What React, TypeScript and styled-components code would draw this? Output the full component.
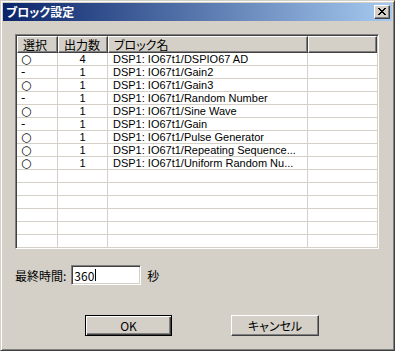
import styled, { createGlobalStyle } from "styled-components"

const GlobalStyle = createGlobalStyle`
    html, body {
        margin:0;
        padding:0;
        background:#d4d0c8;
    }
    body {
        font-family:"Noto Sans CJK JP", "Liberation Sans", sans-serif;
        font-size:12px;
        color:#000;
    }
`

const StyledWindow = styled.div`
    width:395px;
    height:351px;
    box-sizing:border-box;
    background:#d4d0c8;
    border:1px solid;
    border-color:#d4d0c8 #404040 #404040 #d4d0c8;
    box-shadow:inset 1px 1px #fff, inset -1px -1px #808080;
    padding:2px;
    display:flex;
    flex-direction:column;
`

const StyledTitleBar = styled.div`
    height:18px;
    flex-shrink:0;
    background:linear-gradient(to right, #0a246a, #a6caf0);
    display:flex;
    align-items:center;
    justify-content:space-between;
    padding:0 2px 0 3px;
    color:#fff;
    font-weight:bold;

    & span{
        line-height:18px;
        font-feature-settings:"palt";
    }
`

const StyledCloseButton = styled.div`
    width:16px;
    height:14px;
    box-sizing:border-box;
    background:#d4d0c8;
    border:1px solid;
    border-color:#fff #404040 #404040 #fff;
    box-shadow:inset -1px -1px #808080;
    display:flex;
    align-items:center;
    justify-content:center;
    padding:0 1px 1px 0;
`

const StyledBody = styled.div`
    display:flex;
    flex-direction:column;
    padding:13px 13px 0 12px;
`

const StyledList = styled.div`
    width:364px;
    height:215px;
    box-sizing:border-box;
    border:1px solid;
    border-color:#808080 #fff #fff #808080;
    box-shadow:inset 1px 1px #404040, inset -1px -1px #d4d0c8;
    padding:1px;
    background:#fff;
`

const StyledListInner = styled.div`
    height:100%;
    overflow:hidden;
`

const COLUMNS = "41px 50px 200px 1fr"

const StyledHeader = styled.div`
    display:grid;
    grid-template-columns:${COLUMNS};
    height:17px;
`

const StyledHeaderCell = styled.div`
    box-sizing:border-box;
    background:#d4d0c8;
    border:1px solid;
    border-color:#fff #404040 #404040 #fff;
    box-shadow:inset -1px -1px #808080;
    padding-left:5px;
    line-height:15px;
    font-feature-settings:"palt";
    white-space:nowrap;
`

const StyledRow = styled.div`
    display:grid;
    grid-template-columns:${COLUMNS};
    height:13px;
`

const StyledCell = styled.div<{ $center?: boolean }>`
    box-sizing:border-box;
    border-right:1px solid #d4d0c8;
    border-bottom:1px solid #d4d0c8;
    padding-left:${p => (p.$center ? "0" : "5px")};
    text-align:${p => (p.$center ? "center" : "left")};
    font-family:"Liberation Sans", "Noto Sans CJK JP", sans-serif;
    font-size:11px;
    line-height:12px;
    white-space:nowrap;

    &:last-child{
        border-right:none;
    }
`

const StyledMarkCell = styled(StyledCell)`
    font-family:"DejaVu Sans", sans-serif;
    font-size:12px;
    padding-left:4px;
`

const StyledTimeRow = styled.div`
    display:flex;
    align-items:center;
    margin-top:16px;
    height:20px;
`

const StyledTextBox = styled.div`
    width:70px;
    height:20px;
    box-sizing:border-box;
    margin:0 6px 0 5px;
    border:1px solid;
    border-color:#808080 #fff #fff #808080;
    box-shadow:inset 1px 1px #404040, inset -1px -1px #d4d0c8;
    background:#fff;
    padding:0 2px;
    display:flex;
    align-items:center;
`

const StyledCaret = styled.span`
    display:inline-block;
    width:1px;
    height:12px;
    background:#000;
    margin-left:1px;
`

const StyledButtonRow = styled.div`
    display:flex;
    gap:59px;
    margin-top:30px;
    padding-left:70px;
`

const StyledButton = styled.div<{ $default?: boolean }>`
    width:${p => (p.$default ? "87px" : "88px")};
    height:21px;
    box-sizing:border-box;
    background:#d4d0c8;
    display:flex;
    align-items:center;
    justify-content:center;
    font-feature-settings:"palt";
    border:1px solid;
    border-color:${p => (p.$default ? "#000" : "#fff #404040 #404040 #fff")};
    box-shadow:${p =>
        p.$default
            ? "inset 1px 1px #fff, inset -1px -1px #404040, inset -2px -2px #808080"
            : "inset -1px -1px #808080"};
`

const rows = [
    { sel: "○", count: 4, name: "DSP1: IO67t1/DSPIO67 AD" },
    { sel: "-", count: 1, name: "DSP1: IO67t1/Gain2" },
    { sel: "○", count: 1, name: "DSP1: IO67t1/Gain3" },
    { sel: "-", count: 1, name: "DSP1: IO67t1/Random Number" },
    { sel: "○", count: 1, name: "DSP1: IO67t1/Sine Wave" },
    { sel: "-", count: 1, name: "DSP1: IO67t1/Gain" },
    { sel: "○", count: 1, name: "DSP1: IO67t1/Pulse Generator" },
    { sel: "○", count: 1, name: "DSP1: IO67t1/Repeating Sequence..." },
    { sel: "○", count: 1, name: "DSP1: IO67t1/Uniform Random Nu..." },
]

const CloseIcon = () => (
    <svg width="8" height="7" viewBox="0 0 8 7" shapeRendering="crispEdges">
        <path
            fill="#000"
            d="M0 0h2v1H0zM6 0h2v1H6zM1 1h2v1H1zM5 1h2v1H5zM2 2h4v1H2zM3 3h2v1H3zM2 4h4v1H2zM1 5h2v1H1zM5 5h2v1H5zM0 6h2v1H0zM6 6h2v1H6z"
        />
    </svg>
)

const App = () => {
    return (
        <>
            <GlobalStyle />
            <StyledWindow>
                <StyledTitleBar>
                    <span>ブロック設定</span>
                    <StyledCloseButton>
                        <CloseIcon />
                    </StyledCloseButton>
                </StyledTitleBar>
                <StyledBody>
                    <StyledList>
                        <StyledListInner>
                            <StyledHeader>
                                <StyledHeaderCell>選択</StyledHeaderCell>
                                <StyledHeaderCell>出力数</StyledHeaderCell>
                                <StyledHeaderCell>ブロック名</StyledHeaderCell>
                                <StyledHeaderCell />
                            </StyledHeader>
                            {rows.map((r, i) => (
                                <StyledRow key={i}>
                                    <StyledMarkCell>{r.sel}</StyledMarkCell>
                                    <StyledCell $center>{r.count}</StyledCell>
                                    <StyledCell>{r.name}</StyledCell>
                                    <StyledCell />
                                </StyledRow>
                            ))}
                            {Array.from({ length: 6 }).map((_, i) => (
                                <StyledRow key={"e" + i}>
                                    <StyledCell />
                                    <StyledCell />
                                    <StyledCell />
                                    <StyledCell />
                                </StyledRow>
                            ))}
                        </StyledListInner>
                    </StyledList>
                    <StyledTimeRow>
                        <span>最終時間:</span>
                        <StyledTextBox>
                            360<StyledCaret />
                        </StyledTextBox>
                        <span>秒</span>
                    </StyledTimeRow>
                    <StyledButtonRow>
                        <StyledButton $default>OK</StyledButton>
                        <StyledButton>キャンセル</StyledButton>
                    </StyledButtonRow>
                </StyledBody>
            </StyledWindow>
        </>
    )
}

export default App
